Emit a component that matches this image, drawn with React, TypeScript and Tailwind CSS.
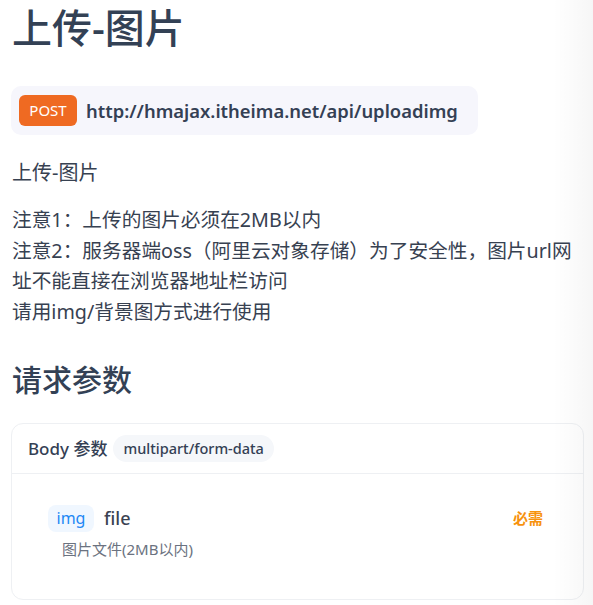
import React from "react";

export default function App() {
  const font = { fontFamily: '"Noto Sans", "Noto Sans CJK SC", sans-serif' };
  return (
    <div className="relative min-h-[605px] w-[593px] overflow-hidden bg-white text-[#344054]" style={font}>
      <div className="pl-[12px] pr-[9px]">
        <h1 className="pt-[1px] text-[40px] leading-[54px] font-medium text-[#334155]">上传-图片</h1>

        <div className="mt-[31px] -ml-[1px] inline-flex items-center gap-[9px] rounded-[10px] bg-[#f6f6fc] py-[9px] pl-[8px] pr-[20px]">
          <span className="flex h-[31px] w-[58px] items-center justify-center rounded-[6px] bg-[#ef6a22] text-[15px] text-white">
            POST
          </span>
          <span className="text-[18.4px] font-semibold text-[#344054]">http://hmajax.itheima.net/api/uploadimg</span>
        </div>

        <p className="mt-[23px] text-[20px] leading-[30px] text-[#374151]">上传-图片</p>

        <p className="mt-[17px] text-[19.7px] leading-[30.5px] text-[#374151]">
          注意1：上传的图片必须在2MB以内
          <br />
          注意2：服务器端oss（阿里云对象存储）为了安全性，图片url网址不能直接在浏览器地址栏访问
          <br />
          请用img/背景图方式进行使用
        </p>

        <h2 className="mt-[33px] text-[30px] leading-[40px] font-medium text-[#334155]">请求参数</h2>

        <div className="mt-[23px] -ml-[1px] rounded-[12px] border border-[#eef0f3] bg-white">
          <div className="flex h-[50px] items-center gap-[6px] border-b border-[#eef0f3] px-[16px]">
            <span className="text-[17px] font-medium text-[#344054]">Body 参数</span>
            <span className="flex h-[27px] items-center rounded-full bg-[#f5f7fa] px-[10px] text-[14.5px] font-medium text-[#344054]">
              multipart/form-data
            </span>
          </div>
          <div className="px-[36px] pt-[29px] pb-[40px]">
            <div className="flex items-center justify-between pr-[4px]">
              <div className="flex items-center gap-[10px]">
                <span className="flex h-[27px] w-[46px] items-center justify-center rounded-[8px] bg-[#f0f7ff] text-[16px] text-[#1e88f5]">
                  img
                </span>
                <span className="text-[18px] font-medium leading-[30px] text-[#3b4252]">file</span>
              </div>
              <span className="text-[15px] font-semibold text-[#f7920e]">必需</span>
            </div>
            <p className="mt-[6px] pl-[14px] text-[15px] leading-[20px] text-[#6b7280]">图片文件(2MB以内)</p>
          </div>
        </div>
      </div>

      <div className="pointer-events-none absolute inset-y-0 right-0 w-[40px] bg-gradient-to-r from-[rgba(0,0,0,0)] to-[rgba(0,0,0,0.035)]" />
    </div>
  );
}
